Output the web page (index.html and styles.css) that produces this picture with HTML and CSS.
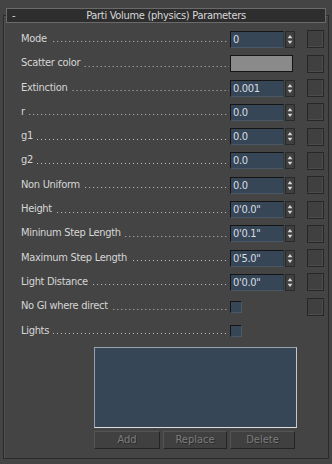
FILE: index.html
```html
<!DOCTYPE html>
<html>
<head>
<meta charset="utf-8">
<link rel="stylesheet" href="styles.css">
</head>
<body>
<div class="page">
  <div class="panel">
    <div class="title">
      <span class="title-sign">-</span>
      <span class="title-text">Parti Volume (physics) Parameters</span>
    </div>
    <div class="rows">
      <div class="row">
        <div class="label"><span>Mode</span><span class="leader"></span></div>
        <div class="ctrl"><div class="field">0</div><div class="spin"><svg width="10" height="17" viewBox="0 0 10 17"><path d="M2 7h6L5 3z" fill="#d8d8d8"/><path d="M2 10h6l-3 4z" fill="#d8d8d8"/></svg></div></div>
        <div class="sq"></div>
      </div>
      <div class="row">
        <div class="label"><span>Scatter color</span><span class="leader"></span></div>
        <div class="ctrl"><div class="swatch"></div></div>
        <div class="sq"></div>
      </div>
      <div class="row">
        <div class="label"><span>Extinction</span><span class="leader"></span></div>
        <div class="ctrl"><div class="field">0.001</div><div class="spin"><svg width="10" height="17" viewBox="0 0 10 17"><path d="M2 7h6L5 3z" fill="#d8d8d8"/><path d="M2 10h6l-3 4z" fill="#d8d8d8"/></svg></div></div>
        <div class="sq"></div>
      </div>
      <div class="row">
        <div class="label"><span>r</span><span class="leader"></span></div>
        <div class="ctrl"><div class="field">0.0</div><div class="spin"><svg width="10" height="17" viewBox="0 0 10 17"><path d="M2 7h6L5 3z" fill="#d8d8d8"/><path d="M2 10h6l-3 4z" fill="#d8d8d8"/></svg></div></div>
        <div class="sq"></div>
      </div>
      <div class="row">
        <div class="label"><span>g1</span><span class="leader"></span></div>
        <div class="ctrl"><div class="field">0.0</div><div class="spin"><svg width="10" height="17" viewBox="0 0 10 17"><path d="M2 7h6L5 3z" fill="#d8d8d8"/><path d="M2 10h6l-3 4z" fill="#d8d8d8"/></svg></div></div>
        <div class="sq"></div>
      </div>
      <div class="row">
        <div class="label"><span>g2</span><span class="leader"></span></div>
        <div class="ctrl"><div class="field">0.0</div><div class="spin"><svg width="10" height="17" viewBox="0 0 10 17"><path d="M2 7h6L5 3z" fill="#d8d8d8"/><path d="M2 10h6l-3 4z" fill="#d8d8d8"/></svg></div></div>
        <div class="sq"></div>
      </div>
      <div class="row">
        <div class="label"><span>Non Uniform</span><span class="leader"></span></div>
        <div class="ctrl"><div class="field">0.0</div><div class="spin"><svg width="10" height="17" viewBox="0 0 10 17"><path d="M2 7h6L5 3z" fill="#d8d8d8"/><path d="M2 10h6l-3 4z" fill="#d8d8d8"/></svg></div></div>
        <div class="sq"></div>
      </div>
      <div class="row">
        <div class="label"><span>Height</span><span class="leader"></span></div>
        <div class="ctrl"><div class="field">0'0.0"</div><div class="spin"><svg width="10" height="17" viewBox="0 0 10 17"><path d="M2 7h6L5 3z" fill="#d8d8d8"/><path d="M2 10h6l-3 4z" fill="#d8d8d8"/></svg></div></div>
        <div class="sq"></div>
      </div>
      <div class="row">
        <div class="label"><span>Mininum Step Length</span><span class="leader"></span></div>
        <div class="ctrl"><div class="field">0'0.1"</div><div class="spin"><svg width="10" height="17" viewBox="0 0 10 17"><path d="M2 7h6L5 3z" fill="#d8d8d8"/><path d="M2 10h6l-3 4z" fill="#d8d8d8"/></svg></div></div>
        <div class="sq"></div>
      </div>
      <div class="row">
        <div class="label"><span>Maximum Step Length</span><span class="leader"></span></div>
        <div class="ctrl"><div class="field">0'5.0"</div><div class="spin"><svg width="10" height="17" viewBox="0 0 10 17"><path d="M2 7h6L5 3z" fill="#d8d8d8"/><path d="M2 10h6l-3 4z" fill="#d8d8d8"/></svg></div></div>
        <div class="sq"></div>
      </div>
      <div class="row">
        <div class="label"><span>Light Distance</span><span class="leader"></span></div>
        <div class="ctrl"><div class="field">0'0.0"</div><div class="spin"><svg width="10" height="17" viewBox="0 0 10 17"><path d="M2 7h6L5 3z" fill="#d8d8d8"/><path d="M2 10h6l-3 4z" fill="#d8d8d8"/></svg></div></div>
        <div class="sq"></div>
      </div>
      <div class="row">
        <div class="label"><span>No GI where direct</span><span class="leader"></span></div>
        <div class="ctrl"><div class="check"></div></div>
        <div class="sq"></div>
      </div>
      <div class="row">
        <div class="label"><span>Lights</span><span class="leader"></span></div>
        <div class="ctrl"><div class="check"></div></div>
        <div class="sq sq-none"></div>
      </div>
    </div>
    <div class="list"></div>
    <div class="buttons">
      <div class="btn btn-add">Add</div>
      <div class="btn btn-replace">Replace</div>
      <div class="btn btn-delete">Delete</div>
    </div>
  </div>
</div>
</body>
</html>
```

FILE: styles.css
```css
html, body {
  margin: 0;
  padding: 0;
  background: #444444;
}
body {
  width: 332px;
  height: 464px;
  overflow: hidden;
  font-family: "DejaVu Sans Condensed", "Liberation Sans", Arial, sans-serif;
  font-stretch: condensed;
  font-size: 11px;
  letter-spacing: -0.3px;
  color: #d6d6d6;
}
.page {
  padding: 15px 3px 0 3px;
}
.panel {
  height: 442px;
  border: 1px solid #2a2a2a;
  box-shadow: inset 1px 1px 0 #505050;
  display: flex;
  flex-direction: column;
}
.title {
  position: relative;
  z-index: 1;
  margin: -8px 2px 0 2px;
  height: 13px;
  border: 1px solid #6a6a6a;
  background: #2e2e2e;
  display: flex;
  align-items: center;
  justify-content: center;
}
.title-sign {
  position: absolute;
  left: 5px;
  top: 0;
  line-height: 13px;
  color: #d8d8d8;
}
.title-text {
  color: #d8d8d8;
  line-height: 13px;
}
.rows {
  margin-top: 4.3px;
  display: grid;
  grid-auto-rows: 24.3px;
}
.row {
  display: flex;
  align-items: center;
  padding: 0 4px 0 17px;
}
.label {
  flex: 1;
  display: flex;
  align-items: center;
  white-space: nowrap;
  padding-bottom: 2px;
}
.leader {
  flex: 1;
  height: 1px;
  margin: 7px 1px 0 4px;
  background-image: linear-gradient(to right, #c0c0c0 1px, transparent 1px);
  background-size: 4px 1px;
  background-repeat: repeat-x;
  background-position: right top;
}
.ctrl {
  width: 65px;
  height: 17px;
  display: flex;
  align-items: center;
  gap: 1px;
}
.field {
  width: 50px;
  height: 15px;
  line-height: 15px;
  padding-left: 2px;
  background: #374656;
  border-top: 1px solid #141414;
  border-left: 1px solid #141414;
  border-right: 1px solid #2e3a46;
  border-bottom: 1px solid #4a5866;
  color: #d6dde4;
  white-space: nowrap;
}
.spin {
  width: 10px;
  height: 17px;
  box-sizing: border-box;
  border: 1px solid #2a2a2a;
  background: #3f3f3f;
  display: flex;
  align-items: center;
  justify-content: center;
}
.spin svg {
  display: block;
  width: 8px;
  height: 15px;
}
.swatch {
  width: 61px;
  height: 15px;
  border: 1px solid #141414;
  background: #8a8a8a;
}
.check {
  width: 10px;
  height: 10px;
  background: #374656;
  border-top: 1px solid #141414;
  border-left: 1px solid #141414;
  border-right: 1px solid #4a5866;
  border-bottom: 1px solid #4a5866;
}
.sq {
  margin-left: 12px;
  width: 15px;
  height: 16px;
  border: 1px solid #272727;
  box-shadow: inset -1px -1px 0 #4c4c4c;
  background: #404040;
}
.sq-none {
  visibility: hidden;
}
.list {
  margin: 4px 0 0 90px;
  width: 201px;
  height: 79px;
  background: #364656;
  border: 1px solid #9aa3ad;
  border-bottom-color: #dcdcdc;
  border-right-color: #c4c8cc;
}
.buttons {
  margin: 3px 0 0 90px;
  display: flex;
  gap: 3px;
}
.btn {
  height: 16px;
  line-height: 16px;
  text-align: center;
  color: #7c7c7c;
  text-shadow: 1px 1px 0 #2c2c2c;
  border: 1px solid #242424;
  border-top-color: #555555;
  border-left-color: #555555;
  background: #404040;
  letter-spacing: 0;
}
.btn-add { width: 64px; }
.btn-replace { width: 62px; }
.btn-delete { width: 63px; }
```
